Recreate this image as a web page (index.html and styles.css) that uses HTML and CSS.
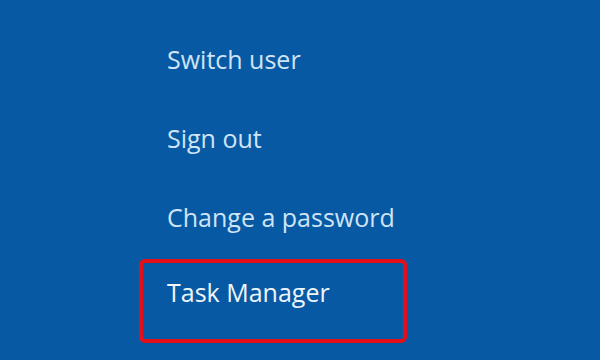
FILE: index.html
```html
<!DOCTYPE html>
<html lang="en">
<head>
    <meta charset="UTF-8">
    <title>Security options</title>
    <link rel="stylesheet" href="styles.css">
</head>
<body>
    <ul class="options">
        <li class="option">Switch user</li>
        <li class="option">Sign out</li>
        <li class="option">Change a password</li>
        <li class="option selected">Task Manager</li>
    </ul>
</body>
</html>
```

FILE: styles.css
```css
body {
    margin: 0;
    height: 360px;
    overflow: hidden;
    background: #0859a4;
    font-family: "Open Sans", "Noto Sans", sans-serif;
}
.options {
    list-style: none;
    margin: 0;
    padding: 26px 0 0 139px;
}
.option {
    box-sizing: border-box;
    width: 268px;
    height: 79px;
    padding: 12px 24px 0;
    border: 4px solid transparent;
    border-radius: 6px;
    font-size: 25px;
    line-height: 34px;
    white-space: nowrap;
    color: #cfe4f5;
}
.option.selected {
    height: 84px;
    margin-top: -4px;
    border-color: #e3101c;
    color: #eef5fb;
}
```
